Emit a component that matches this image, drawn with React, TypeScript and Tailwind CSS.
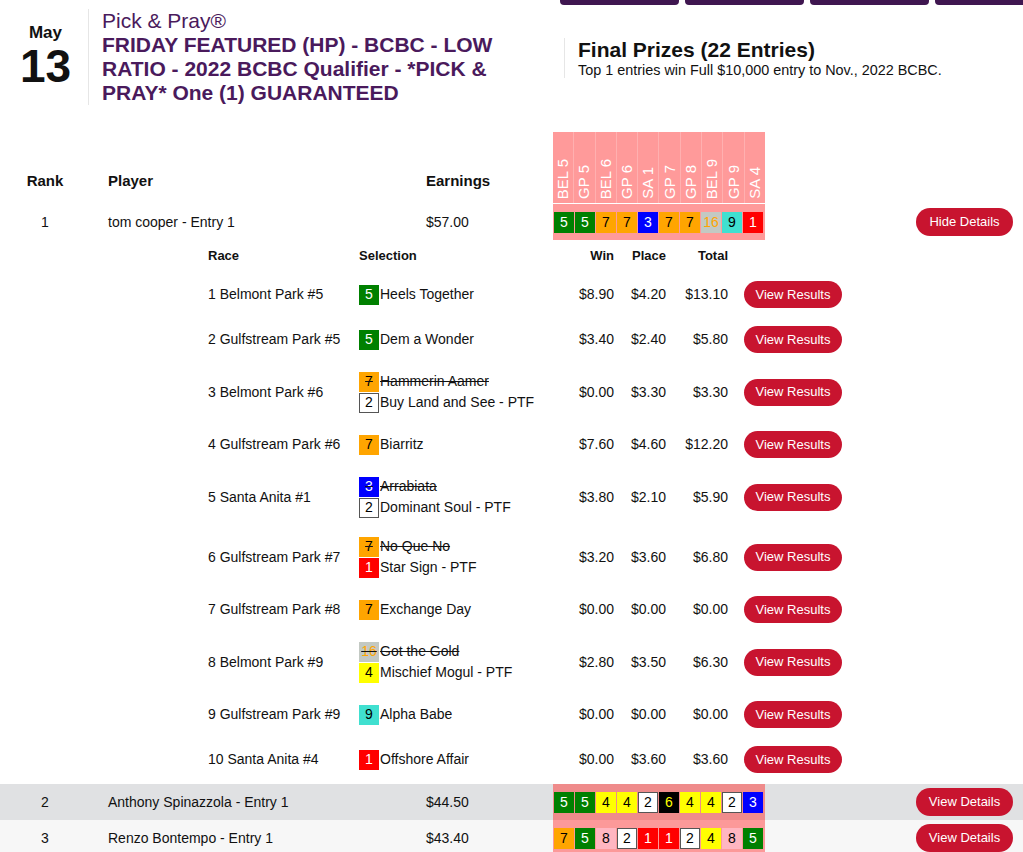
import React from 'react';

type Pick = { n: number; name: string; scratched?: boolean };

type Leg = {
  race: string;
  picks: Pick[];
  win: string;
  place: string;
  total: string;
};

const badgeStyles: Record<number, string> = {
  1: 'bg-[#ff0000] text-white',
  2: 'bg-white text-black border border-[#555]',
  3: 'bg-[#0000ff] text-white',
  4: 'bg-[#ffff00] text-black',
  5: 'bg-[#008000] text-white',
  6: 'bg-black text-[#ffff00]',
  7: 'bg-[#ffa500] text-black',
  8: 'bg-[#ffb6c1] text-black',
  9: 'bg-[#40e0d0] text-black',
  16: 'bg-[#c3c9c3] text-[#ffa500]',
};

const tracks = ['BEL 5', 'GP 5', 'BEL 6', 'GP 6', 'SA 1', 'GP 7', 'GP 8', 'BEL 9', 'GP 9', 'SA 4'];

const legs: Leg[] = [
  { race: '1 Belmont Park #5', picks: [{ n: 5, name: 'Heels Together' }], win: '$8.90', place: '$4.20', total: '$13.10' },
  { race: '2 Gulfstream Park #5', picks: [{ n: 5, name: 'Dem a Wonder' }], win: '$3.40', place: '$2.40', total: '$5.80' },
  {
    race: '3 Belmont Park #6',
    picks: [
      { n: 7, name: 'Hammerin Aamer', scratched: true },
      { n: 2, name: 'Buy Land and See - PTF' },
    ],
    win: '$0.00',
    place: '$3.30',
    total: '$3.30',
  },
  { race: '4 Gulfstream Park #6', picks: [{ n: 7, name: 'Biarritz' }], win: '$7.60', place: '$4.60', total: '$12.20' },
  {
    race: '5 Santa Anita #1',
    picks: [
      { n: 3, name: 'Arrabiata', scratched: true },
      { n: 2, name: 'Dominant Soul - PTF' },
    ],
    win: '$3.80',
    place: '$2.10',
    total: '$5.90',
  },
  {
    race: '6 Gulfstream Park #7',
    picks: [
      { n: 7, name: 'No Que No', scratched: true },
      { n: 1, name: 'Star Sign - PTF' },
    ],
    win: '$3.20',
    place: '$3.60',
    total: '$6.80',
  },
  { race: '7 Gulfstream Park #8', picks: [{ n: 7, name: 'Exchange Day' }], win: '$0.00', place: '$0.00', total: '$0.00' },
  {
    race: '8 Belmont Park #9',
    picks: [
      { n: 16, name: 'Got the Gold', scratched: true },
      { n: 4, name: 'Mischief Mogul - PTF' },
    ],
    win: '$2.80',
    place: '$3.50',
    total: '$6.30',
  },
  { race: '9 Gulfstream Park #9', picks: [{ n: 9, name: 'Alpha Babe' }], win: '$0.00', place: '$0.00', total: '$0.00' },
  { race: '10 Santa Anita #4', picks: [{ n: 1, name: 'Offshore Affair' }], win: '$0.00', place: '$3.60', total: '$3.60' },
];

const players = [
  { rank: 1, name: 'tom cooper - Entry 1', earnings: '$57.00', nums: [5, 5, 7, 7, 3, 7, 7, 16, 9, 1], open: true },
  { rank: 2, name: 'Anthony Spinazzola - Entry 1', earnings: '$44.50', nums: [5, 5, 4, 4, 2, 6, 4, 4, 2, 3] },
  { rank: 3, name: 'Renzo Bontempo - Entry 1', earnings: '$43.40', nums: [7, 5, 8, 2, 1, 1, 2, 4, 8, 5] },
];

const rowStyles = [
  { row: 'bg-white', pink: 'bg-[#ff9a9a]' },
  { row: 'bg-[#e0e1e3]', pink: 'bg-[#ef8b8b]' },
  { row: 'bg-[#f7f7f7]', pink: 'bg-[#fc9999]' },
];

const RedButton = ({ label, className = '' }: { label: string; className?: string }) => (
  <button className={`shrink-0 rounded-full bg-[#c8142f] text-white text-[13px] ${className}`}>{label}</button>
);

const App = () => {
  return (
    <div className="w-[1023px] h-[852px] overflow-hidden bg-white text-[#111] font-['Liberation_Sans',Arial,sans-serif]">
      {/* nav buttons, mostly scrolled off */}
      <div className="flex gap-[6px] pl-[560px] h-[5px] overflow-hidden">
        {[0, 1, 2, 3].map((i) => (
          <div key={i} className="w-[119px] shrink-0 h-[5px] rounded-b-[4px] bg-[#3f1650]" />
        ))}
      </div>

      {/* header */}
      <div className="flex mt-[4px]">
        <div className="w-[88px] flex flex-col items-center pt-[14px] pl-[3px]">
          <span className="text-[17px] leading-[20px] font-bold">May</span>
          <span className="text-[46px] leading-[44px] font-bold mt-[1px]">13</span>
        </div>
        <div className="w-[476px] border-l border-[#e6e6e6] pl-[13px] text-[#4a1a5c]">
          <div className="text-[21px] leading-[24px]">Pick &amp; Pray®</div>
          <div className="max-w-[420px] text-[21px] leading-[24px] font-bold">
            FRIDAY FEATURED (HP) - BCBC - LOW RATIO - 2022 BCBC Qualifier - *PICK &amp; PRAY* One (1) GUARANTEED
          </div>
        </div>
        <div className="mt-[29px] h-[40px] border-l border-[#e6e6e6] pl-[13px]">
          <div className="text-[21px] leading-[24px] font-bold">Final Prizes (22 Entries)</div>
          <div className="text-[14.4px] leading-[16px]">Top 1 entries win Full $10,000 entry to Nov., 2022 BCBC.</div>
        </div>
      </div>

      {/* leaderboard header */}
      <div className="flex items-end h-[71px] mt-[27px] text-[15px] font-bold">
        <div className="w-[90px] text-center pb-[11px]">Rank</div>
        <div className="w-[318px] ml-[18px] pb-[11px]">Player</div>
        <div className="w-[127px] pb-[11px]">Earnings</div>
        <div className="w-[212px] h-full flex bg-[#ff9a9a] divide-x divide-[#ffb0b0] font-normal">
          {tracks.map((t) => (
            <div key={t} className="flex-1 flex items-end justify-center pb-[4px]">
              <span className="[writing-mode:vertical-rl] rotate-180 text-white text-[15px] leading-[16px]">{t}</span>
            </div>
          ))}
        </div>
      </div>

      {players.map((p, idx) => (
        <React.Fragment key={p.rank}>
          <div className={`flex items-center h-[36px] text-[14px] ${idx === 0 ? 'mt-[1px]' : ''} ${rowStyles[idx].row}`}>
            <div className="w-[90px] text-center">{p.rank}</div>
            <div className="w-[318px] ml-[18px]">{p.name}</div>
            <div className="w-[127px]">{p.earnings}</div>
            <div className={`w-[212px] h-full flex items-center gap-[1px] px-[1px] ${rowStyles[idx].pink}`}>
              {p.nums.map((n, i) => (
                <span
                  key={i}
                  className={`w-[20px] h-[21px] flex items-center justify-center text-[14px] ${badgeStyles[n]}`}
                >
                  {n}
                </span>
              ))}
            </div>
            <div className="flex-1 flex justify-end pr-[10px]">
              <RedButton label={p.open ? 'Hide Details' : 'View Details'} className="w-[97px] h-[28px]" />
            </div>
          </div>

          {p.open && (
            <div className="pl-[208px] pb-[2px]">
              <div className="flex items-center h-[32px] pb-[1px] text-[13px] font-bold">
                <div className="w-[151px]">Race</div>
                <div className="w-[200px]">Selection</div>
                <div className="w-[55px] text-right">Win</div>
                <div className="w-[52px] text-right">Place</div>
                <div className="w-[62px] text-right">Total</div>
              </div>
              {legs.map((l) => (
                <div key={l.race} className="flex items-center py-[9px] text-[14px]">
                  <div className="w-[151px]">{l.race}</div>
                  <div className="w-[200px] flex flex-col">
                    {l.picks.map((s) => (
                      <div key={s.name} className={`flex items-center h-[21px] ${s.scratched ? 'line-through' : ''}`}>
                        <span
                          className={`w-[20px] h-[20px] mr-[1px] flex items-center justify-center ${badgeStyles[s.n]}`}
                        >
                          {s.n}
                        </span>
                        <span>{s.name}</span>
                      </div>
                    ))}
                  </div>
                  <div className="w-[55px] text-right">{l.win}</div>
                  <div className="w-[52px] text-right">{l.place}</div>
                  <div className="w-[62px] text-right">{l.total}</div>
                  <RedButton label="View Results" className="ml-[16px] w-[98px] h-[27px]" />
                </div>
              ))}
            </div>
          )}
        </React.Fragment>
      ))}
    </div>
  );
};

export default App;
